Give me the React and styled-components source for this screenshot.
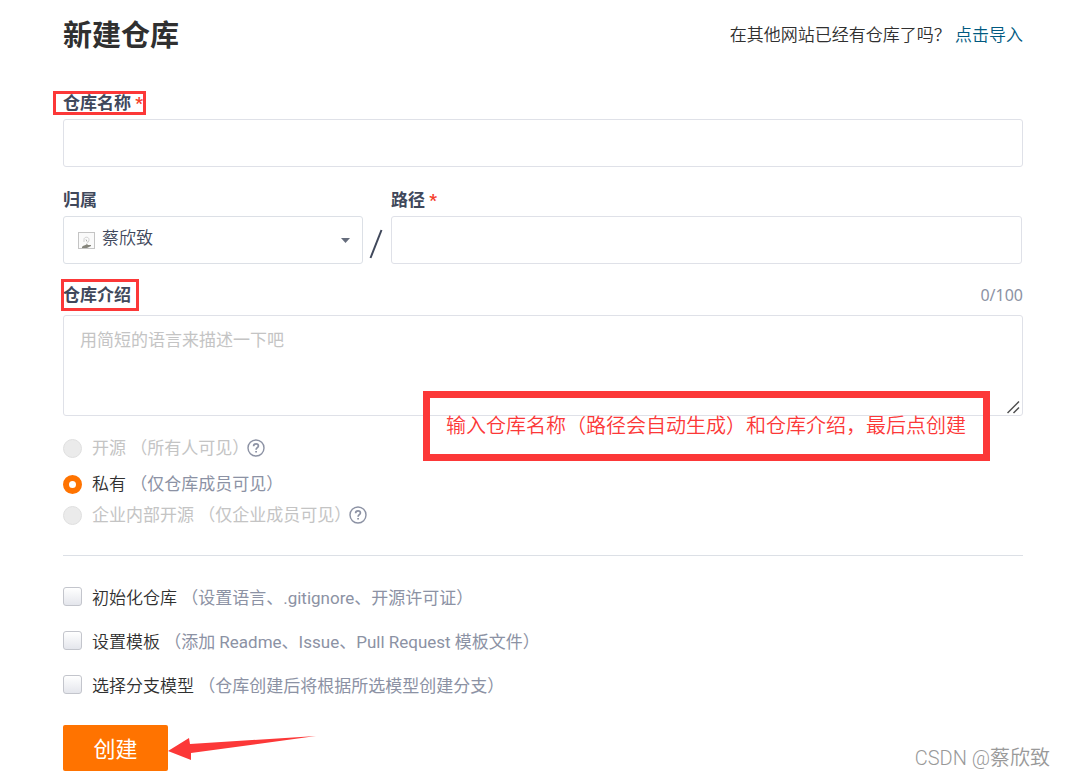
import React, { useState } from 'react';
import styled, { createGlobalStyle } from 'styled-components';

const GlobalStyle = createGlobalStyle`
  * {
    box-sizing: border-box;
  }
  body {
    margin: 0;
    background: #fff;
    color: #303030;
    font-family: Roboto, 'Noto Sans CJK SC', sans-serif;
    font-size: 17px;
    line-height: 24px;
  }
  input, select, textarea, button {
    font: inherit;
    color: inherit;
    margin: 0;
  }
`;

const Page = styled.main`
  position: relative;
  padding: 15px 42px 6px 63px;
`;

const Header = styled.header`
  display: flex;
  align-items: flex-start;
  justify-content: space-between;
  margin-bottom: 34px;
`;

const Title = styled.h1`
  margin: 0;
  font-size: 29px;
  line-height: 42px;
  font-weight: 700;
`;

const ImportHint = styled.p`
  margin: 0;
  line-height: 40px;
  font-weight: 350;
`;

const ImportLink = styled.a`
  color: #005980;
  text-decoration: none;
`;

const Field = styled.div`
  position: relative;
  display: flex;
  flex-direction: column;
  gap: ${({ $gap }) => $gap || 4}px;
  ${({ $grow }) => $grow && 'flex: 1;'}
`;

const LabelRow = styled.div`
  display: flex;
  justify-content: space-between;
`;

const Label = styled.label`
  position: relative;
  color: #40485b;
  font-weight: 700;
`;

const Required = styled.span`
  color: #f5402c;
`;

// red frame drawn around a label
const Mark = styled.span`
  position: absolute;
  top: ${({ $y }) => -$y}px;
  bottom: ${({ $y }) => -$y}px;
  left: ${({ $left }) => -$left}px;
  right: ${({ $right }) => -$right}px;
  border: 3px solid #fc3838;
  pointer-events: none;
`;

const TextInput = styled.input`
  width: 100%;
  height: 48px;
  padding: 0 16px;
  border: 1px solid #dfe1e8;
  border-radius: 3px;
  background: #fff;
`;

const PathRow = styled.div`
  display: flex;
  align-items: flex-end;
  margin: 21px 1px 19px 0;
`;

const SelectBox = styled.div`
  position: relative;
  width: 300px;
`;

const Select = styled.select`
  appearance: none;
  width: 100%;
  height: 48px;
  padding: 0 36px 4px 38px;
  border: 1px solid #dce0e6;
  border-radius: 3px;
  background: #fff;
  color: #40485b;
  font-weight: 350;
`;

const Avatar = styled.svg`
  position: absolute;
  left: 15px;
  top: 16px;
  pointer-events: none;
`;

const Caret = styled.svg`
  position: absolute;
  right: 13px;
  top: 22px;
  pointer-events: none;
`;

const Slash = styled.svg`
  flex: none;
  width: 28px;
  height: 48px;
`;

const Counter = styled.span`
  color: #8c92a4;
  font-family: 'Noto Sans', sans-serif;
  font-size: 16px;
`;

const TextAreaBox = styled.div`
  position: relative;
  display: flex;
`;

const TextArea = styled.textarea`
  width: 100%;
  height: 101px;
  padding: 12px 16px;
  border: 1px solid #dfe1e8;
  border-radius: 3px;
  resize: none;

  &::placeholder {
    color: #c4c4c4;
  }
`;

const Grip = styled.svg`
  position: absolute;
  right: 3px;
  bottom: 2px;
`;

const Callout = styled.div`
  position: absolute;
  top: 76px;
  right: 33px;
  width: 567px;
  height: 70px;
  padding: 14px 15px 0 16px;
  border: 7px solid #fc3838;
  color: #fc3838;
  font-size: 20px;
  font-weight: 350;
  line-height: 28px;
  white-space: nowrap;
`;

const Options = styled.div`
  display: flex;
  flex-direction: column;
  gap: ${({ $gap }) => $gap}px;
  padding: ${({ $pad }) => $pad};
`;

const Option = styled.div`
  display: flex;
  align-items: center;
  margin-bottom: ${({ $spaced }) => ($spaced ? 5 : 0)}px;
  color: ${({ $off }) => ($off ? '#c4c4c4' : '#303030')};
  font-weight: ${({ $off }) => ($off ? 400 : 350)};

  input {
    appearance: none;
    flex: none;
    width: 19px;
    height: 19px;
    margin-right: 10px;
  }
`;

const Radio = styled.input.attrs({ type: 'radio' })`
  border: 1px solid #e0e0e0;
  border-radius: 50%;
  background: #ebebeb;

  &:checked {
    border: 6px solid #ff7300;
    background: #fff;
  }
`;

const Checkbox = styled.input.attrs({ type: 'checkbox' })`
  border: 1px solid #c3c5cc;
  border-radius: 3px;
  background: linear-gradient(#fff, #e4e6ec);

  && {
    margin-bottom: 3px;
  }

  &:checked {
    background: #ff7300;
  }
`;

const Note = styled.span`
  color: ${({ $off }) => ($off ? '#c4c4c4' : '#8c92a4')};
  font-weight: 400;
`;

const Help = styled.svg`
  flex: none;
  margin-left: -2px;
`;

const Divider = styled.hr`
  height: 1px;
  margin: 28px 0 0;
  border: 0;
  background: #dce0e6;
`;

const Submit = styled.button`
  width: 105px;
  height: 46px;
  padding: 3px 0 0;
  border: 0;
  border-radius: 2px;
  background: #ff7300;
  color: #fff;
  font-size: 22px;
`;

const SubmitRow = styled.div`
  display: flex;
  align-items: center;
`;

const Arrow = styled.svg`
  margin-top: 3px;
`;

const Watermark = styled.span`
  position: absolute;
  right: 15px;
  bottom: 5px;
  color: #999;
  font-size: 20px;
  line-height: 28px;
  font-weight: 350;
`;

const HelpIcon = () => (
  <Help width="18" height="18" viewBox="0 0 18 18" fill="none" stroke="#8c92a4" strokeWidth="1.4">
    <circle cx="9" cy="9" r="8" />
    <path d="M6.6 7.2C6.6 5.6 7.6 4.8 9 4.8s2.4.9 2.4 2.1c0 1.7-2.3 1.9-2.3 3.8" strokeWidth="1.7" />
    <path d="M9.1 11.9v1.7" strokeWidth="1.8" />
  </Help>
);

const visibilities = [
  { id: 'public', label: '开源', note: '（所有人可见）', off: true, help: true },
  { id: 'private', label: '私有', note: '（仅仓库成员可见）' },
  { id: 'inner', label: '企业内部开源', note: '（仅企业成员可见）', off: true, help: true },
];

const extras = [
  { id: 'init', label: '初始化仓库', note: '（设置语言、.gitignore、开源许可证）' },
  { id: 'template', label: '设置模板', note: '（添加 Readme、Issue、Pull Request 模板文件）' },
  { id: 'branch', label: '选择分支模型', note: '（仓库创建后将根据所选模型创建分支）' },
];

const App = () => {
  const [intro, setIntro] = useState('');

  return (
    <Page lang="zh-CN">
      <GlobalStyle />
      <Header>
        <Title>新建仓库</Title>
        <ImportHint>
          在其他网站已经有仓库了吗？ <ImportLink href="#import">点击导入</ImportLink>
        </ImportHint>
      </Header>

      <Field>
        <LabelRow>
          <Label htmlFor="name">
            仓库名称 <Required>*</Required>
            <Mark $y={0} $left={10} $right={3} />
          </Label>
        </LabelRow>
        <TextInput id="name" />
      </Field>

      <PathRow>
        <Field>
          <Label htmlFor="owner">归属</Label>
          <SelectBox>
            <Select id="owner">
              <option>蔡欣致</option>
            </Select>
            <Avatar width="17" height="17" viewBox="0 0 17 17" fill="none">
              <rect x="0.5" y="0.5" width="16" height="16" stroke="#c4c4c4" fill="#fafafa" />
              <path d="M6 10V7.5c0-3 5-3 5 0 0 2-1 3-2.5 4" stroke="#cfcfcf" />
              <path d="M4 15c1-2 3-1 5-3l1 1h3v1l-4 2H4z" fill="#85857c" />
              <path d="M8 7.5l1 2" stroke="#aaa" />
            </Avatar>
            <Caret width="9" height="5" viewBox="0 0 9 5">
              <path d="M0 0h9L4.5 5z" fill="#656c7c" />
            </Caret>
          </SelectBox>
        </Field>
        <Slash viewBox="0 0 28 48">
          <path d="M7.5 42L18.500 14" stroke="#40485b" strokeWidth="2" />
        </Slash>
        <Field $grow>
          <Label htmlFor="path">
            路径 <Required>*</Required>
          </Label>
          <TextInput id="path" />
        </Field>
      </PathRow>

      <Field $gap={8}>
        <LabelRow>
          <Label htmlFor="intro">
            仓库介绍
            <Mark $y={4} $left={2} $right={8} />
          </Label>
          <Counter>{intro.length}/100</Counter>
        </LabelRow>
        <TextAreaBox>
          <TextArea
            id="intro"
            maxLength={100}
            placeholder="用简短的语言来描述一下吧"
            value={intro}
            onChange={(e) => setIntro(e.target.value)}
          />
          <Grip width="13" height="13" viewBox="0 0 13 13" stroke="#505050" strokeWidth="1.5">
            <path d="M0.5 12L12 0.5M6.5 12L12 6.5" />
          </Grip>
          <Callout>输入仓库名称（路径会自动生成）和仓库介绍，最后点创建</Callout>
        </TextAreaBox>
      </Field>

      <Options $gap={7} $pad="20px 0 0">
        {visibilities.map((v, idx) => (
          <Option key={v.id} $off={v.off} $spaced={idx === 0}>
            <Radio id={v.id} name="visibility" disabled={v.off} defaultChecked={!v.off} />
            <label htmlFor={v.id}>
              {v.label} <Note $off={v.off}>{v.note}</Note>
            </label>
            {v.help && <HelpIcon />}
          </Option>
        ))}
      </Options>

      <Divider />

      <Options $gap={20} $pad="30px 0 27px">
        {extras.map((x) => (
          <Option key={x.id}>
            <Checkbox id={x.id} />
            <label htmlFor={x.id}>
              {x.label} <Note>{x.note}</Note>
            </label>
          </Option>
        ))}
      </Options>

      <SubmitRow>
        <Submit type="button">创建</Submit>
        <Arrow width="149" height="28" viewBox="0 0 149 28">
          <path d="M0 15L21 2l1 6L148 0 23 17l0 7z" fill="#fc3838" />
        </Arrow>
      </SubmitRow>

      <Watermark>CSDN @蔡欣致</Watermark>
    </Page>
  );
};

export default App;
